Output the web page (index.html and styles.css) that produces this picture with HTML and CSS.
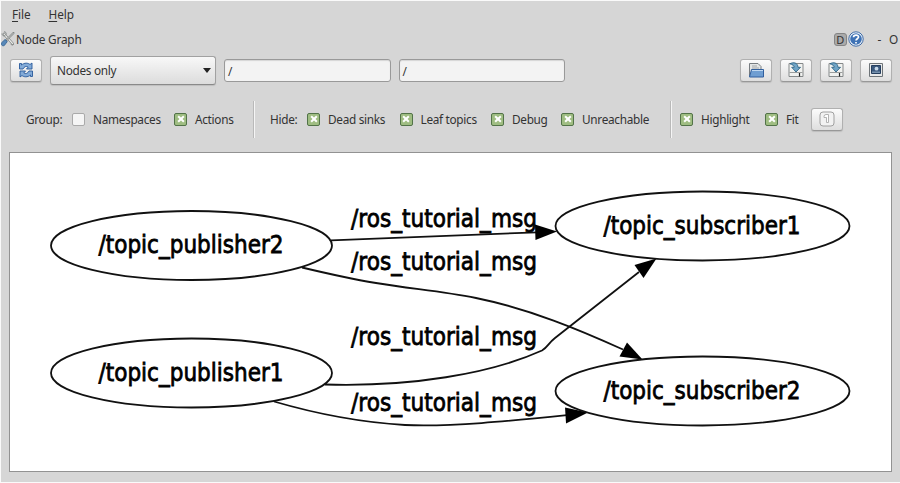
FILE: index.html
```html
<!DOCTYPE html>
<html lang="en">
<head>
<meta charset="utf-8">
<title>Node Graph</title>
<link rel="stylesheet" href="styles.css">
</head>
<body>
<svg class="defs" width="0" height="0" aria-hidden="true">
  <defs>
    <symbol id="save" viewBox="0 0 16 16">
      <path d="M1 1.500h14v13H1z" fill="#f1f2f0" stroke="#85898a"/>
      <path d="M1.500 10.500h13" stroke="#9a9d9d"/>
      <path d="M11.500 11v3.500" stroke="#222" stroke-width="1.200"/>
      <path d="M2 1.800C5.500-.3 9.800.8 10 5.300h2.500L8 10 3.700 5.300h2.500C6.200 3.500 4.500 2.600 2 1.800z" fill="#6fa4c6" stroke="#2d6487" stroke-width=".9"/>
    </symbol>
  </defs>
</svg>
<div class="window">
  <nav class="menubar"><span class="file"><u>F</u>ile</span><span><u>H</u>elp</span></nav>
  <header class="titlebar">
    <svg class="tools" width="14" height="16" viewBox="0 0 14 16">
      <path d="M3 3l8.500 9.500" stroke="#777b7a" stroke-width="2.600" stroke-linecap="round"/>
      <path d="M3 3l8.500 9.500" stroke="#e8e9e7" stroke-width="1.200" stroke-linecap="round"/>
      <path d="M1 2.500c0 2 1.600 3 3.300 2.200M3 .8c1.700-.2 2.700 1.300 2 3M9.800 12.800c.4 1.500 2.200 1.700 3 .4" fill="none" stroke="#858988"/>
      <path d="M5 9.500L12.500 2" stroke="#7e8281" stroke-width="2" stroke-linecap="round"/>
      <path d="M5.500 9L12.500 2" stroke="#dedfdd" stroke-width=".8"/>
      <path d="M4 8.500l2.300 2-3 4c-1.500 1-4-.8-3-2.500z" fill="#5788b9" stroke="#315f90" stroke-width=".8"/>
    </svg>
    <span class="title">Node Graph</span>
    <span class="dock">D</span>
    <svg class="help" width="16" height="16" viewBox="0 0 16 16">
      <circle cx="8" cy="8" r="7.200" fill="#edf3fa" stroke="#3e6ba6"/>
      <circle cx="8" cy="8" r="5.800" fill="#3e72b5"/>
      <path d="M5.500 6.200C5.700 3.400 10.700 3.500 10.500 6.200 10.300 7.700 8 7.800 8 9.600M8 11v1.500" fill="none" stroke="#fff" stroke-width="1.700"/>
    </svg>
    <span class="minus">-</span><span class="float">O</span>
  </header>
  <div class="toolbar">
    <button class="btn refresh" aria-label="Refresh">
      <svg width="16" height="16" viewBox="0 0 16 16"><g fill="#83abd8" stroke="#28599b" stroke-width=".9" stroke-linejoin="round"><path d="M1.500 7V1.500h2V3C6.500.5 10 .8 12 2.500L14 1v6H8.500l1.700-1.900C8.200 3.800 6.300 4.400 5 7z"/><path d="M14.500 9v5.500h-2V13c-3 2.500-6.500 2.200-8.500.5L2 15V9h5.500l-1.700 1.900c2 1.300 3.900.7 5.200-1.900z"/></g></svg>
    </button>
    <div class="combo"><span>Nodes only</span><i class="caret"></i></div>
    <div class="field">/</div>
    <div class="field">/</div>
    <div class="actions">
      <button class="btn" aria-label="Open"><svg width="16" height="16" viewBox="0 0 16 16"><path d="M1.500 14V1.500h8.500l3 3V14z" fill="#e4e6e5" stroke="#777c80"/><path d="M4 4h5M4 6h7" stroke="#a1a5a8"/><path d="M3.500 7.500h12v7.500H1.500z" fill="#6f9ed2" stroke="#315f9e"/><path d="M4 8.500h11" stroke="#c0d8f1"/></svg></button>
      <button class="btn" aria-label="Save"><svg width="16" height="16"><use href="#save"/></svg></button>
      <button class="btn" aria-label="Save as SVG"><svg width="16" height="16"><use href="#save"/></svg></button>
      <button class="btn" aria-label="Save as image"><svg width="16" height="16" viewBox="0 0 16 16"><path d="M1.500 1.500h13v13h-13z" fill="#e9eaea" stroke="#6e7478"/><path d="M3.500 3.500h9v8h-9z" fill="#3a587d" stroke="#263f5e"/><path d="M4 9.500h8V11H4z" fill="#7792ae"/><circle cx="8.500" cy="6.700" r="1.900" fill="#c7d9e9"/></svg></button>
    </div>
  </div>
  <div class="options">
    <span>Group:</span>
    <label><i class="box"></i>Namespaces</label>
    <label><i class="box on"></i>Actions</label>
    <i class="rule"></i>
    <span>Hide:</span>
    <label><i class="box on"></i>Dead sinks</label>
    <label><i class="box on"></i>Leaf topics</label>
    <label><i class="box on"></i>Debug</label>
    <label><i class="box on"></i>Unreachable</label>
    <i class="rule"></i>
    <label><i class="box on"></i>Highlight</label>
    <label><i class="box on"></i>Fit</label>
    <button class="btn fit" aria-label="Fit in view"><svg width="16" height="16" viewBox="0 0 16 16"><rect x="1" y="1" width="14" height="14" rx="3" fill="#f2f2f2" stroke="#a0a0a0"/><path d="M5 5.500Q5 3.500 7 3.500h2.500v8h-2v-5H5z" fill="#fff" stroke="#aaa" stroke-width=".9"/></svg></button>
  </div>
  <main class="canvas">
    <svg width="881" height="318" viewBox="10 153 881 318">
      <g class="edges">
        <path d="M331 240.300L537 232.300"/>
        <path d="M302 267.500C325 273 352 279 376 283C412 289 441 291 476 298C530 309 580 330 623 349.500"/>
        <path d="M325 384.500C410 387 490 374 542 350.500C548 347 548 343.500 555 338L639 272"/>
        <path d="M274 401.500C310 412 355 422 405 425C450 427 510 421 567 415.200"/>
      </g>
      <g class="heads">
        <path d="M535 224.500L557 231.500 535.500 240z"/>
        <path d="M627 342.500L642.500 359.500 619.500 356.500z"/>
        <path d="M634.500 265L656.500 258.500 643.500 278z"/>
        <path d="M565 407.500L588 412.500 566 423.500z"/>
      </g>
      <g class="nodes">
        <ellipse cx="191.500" cy="245.500" rx="140.500" ry="34.500"/>
        <ellipse cx="191.500" cy="373" rx="140.500" ry="34.500"/>
        <ellipse cx="702.500" cy="226" rx="147" ry="34.500"/>
        <ellipse cx="702.500" cy="391" rx="147" ry="34.500"/>
      </g>
      <g class="names">
        <text x="98.500" y="253" textLength="185" lengthAdjust="spacingAndGlyphs">/topic_publisher2</text>
        <text x="98.500" y="380.500" textLength="185" lengthAdjust="spacingAndGlyphs">/topic_publisher1</text>
        <text x="603.500" y="233.500" textLength="197" lengthAdjust="spacingAndGlyphs">/topic_subscriber1</text>
        <text x="603.500" y="398.500" textLength="197" lengthAdjust="spacingAndGlyphs">/topic_subscriber2</text>
        <text x="351" y="226.500" textLength="186" lengthAdjust="spacingAndGlyphs">/ros_tutorial_msg</text>
        <text x="351" y="269.500" textLength="186" lengthAdjust="spacingAndGlyphs">/ros_tutorial_msg</text>
        <text x="351" y="344.500" textLength="186" lengthAdjust="spacingAndGlyphs">/ros_tutorial_msg</text>
        <text x="351" y="411" textLength="186" lengthAdjust="spacingAndGlyphs">/ros_tutorial_msg</text>
      </g>
    </svg>
  </main>
</div>
</body>
</html>
```

FILE: styles.css
```css
* { box-sizing: border-box; }
body {
  margin: 0;
  background: #fafafa;
  color: #333;
  font: 11.8px/16px "Noto Sans", "Open Sans", sans-serif;
  letter-spacing: -.3px;
  overflow: hidden;
}
.defs { display: none; }
.window {
  display: flex;
  flex-direction: column;
  width: 899px;
  height: 481px;
  margin: 1px 0 1px 1px;
  background: #d6d6d6;
}
svg { display: block; flex: none; }
.menubar { display: flex; gap: 18px; height: 25px; padding: 5px 0 0 11px; letter-spacing: -.1px; }
.menubar u { text-underline-offset: 2px; }
.titlebar { display: flex; align-items: center; height: 26px; }
.title { margin-left: 1px; flex: 1; letter-spacing: -.2px; }
.dock {
  width: 13px;
  height: 13px;
  margin-right: 1px;
  border: 1px solid #858585;
  border-radius: 3px;
  background: #aaa;
  font-size: 11px;
  line-height: 11px;
  text-align: center;
}
.help { margin-right: 1px; }
.minus { margin-left: 13px; }
.float { width: 10px; margin-left: 8px; margin-right: 1px; }
.toolbar { display: flex; align-items: center; height: 36px; padding-left: 9px; }
.btn {
  display: flex;
  align-items: center;
  justify-content: center;
  width: 32px;
  height: 23px;
  padding: 0;
  border: 1px solid #b0b0b0;
  border-bottom-color: #989898;
  border-radius: 3px;
  background: linear-gradient(#fbfbfb, #dedede);
  box-shadow: 0 1px 1px #bdbdbd;
}
.combo {
  display: flex;
  align-items: center;
  justify-content: space-between;
  width: 166px;
  height: 29px;
  margin-left: 8px;
  padding: 0 4px 0 6px;
  border: 1px solid #a1a1a1;
  border-bottom-color: #898989;
  border-radius: 3px;
  background: linear-gradient(#f8f8f8, #dcdcdc);
  box-shadow: 0 1px 1px #bebebe;
}
.caret { border: 4px solid transparent; border-top: 5px solid #222; border-bottom: 0; }
.field {
  width: 167px;
  height: 23px;
  margin-left: 8px;
  padding: 3px 3px;
  border: 1px solid #999;
  border-radius: 3px;
  background: #f3f3f3;
  box-shadow: inset 0 1px 1px #d5d5d5;
}
.field + .field { margin-left: 7.500px; width: 166px; }
.actions { display: flex; gap: 7.700px; margin-left: auto; padding-right: 8.500px; }
.options {
  display: grid;
  grid-template-columns: 46px 102px 79px 17px 37px 92.500px 91.500px 70px 109px 10px 85px 46px 32px;
  align-items: center;
  height: 62px;
  padding-left: 25px;
}
.options label { display: flex; align-items: center; gap: 8px; white-space: nowrap; }
.box {
  position: relative;
  flex: none;
  width: 13px;
  height: 13px;
  border: 1px solid #aaa;
  border-radius: 2px;
  background: #f5f5f5;
}
.box.on { border-color: #527348; background: #9fbd82; }
.box.on::before, .box.on::after {
  content: "";
  position: absolute;
  top: 4.500px;
  left: 1.500px;
  width: 8px;
  height: 2px;
  background: #fff;
  transform: rotate(45deg);
}
.box.on::after { transform: rotate(-45deg); }
.rule { width: 2px; height: 37px; border-left: 1px solid #b9b9b9; background: #f5f5f5; }
.canvas {
  width: 883px;
  height: 320px;
  margin: 2px 0 0 8px;
  border: 1px solid #929292;
  background: #fff;
}
.edges { fill: none; stroke: #111; stroke-width: 1.8; }
.heads { fill: #000; }
.nodes { fill: none; stroke: #111; stroke-width: 1.8; }
.names { font: 24px "DejaVu Sans", sans-serif; letter-spacing: 0; fill: #000; stroke: #000; stroke-width: .8px; }
```
